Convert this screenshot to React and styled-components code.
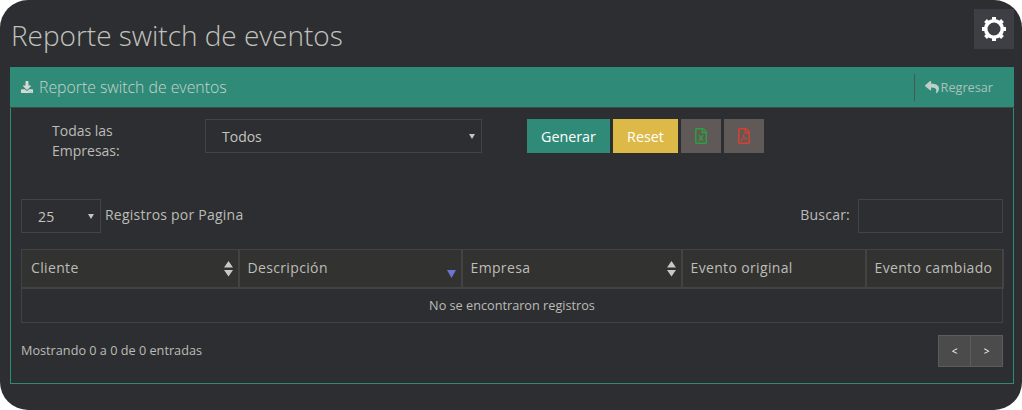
import React from "react";
import styled, { createGlobalStyle } from "styled-components";
import { FaDownload, FaReply, FaRegFileExcel, FaRegFilePdf } from "react-icons/fa";

const Global = createGlobalStyle`
  html, body { margin: 0; padding: 0; background: #fff; }
  body { font-family: "Open Sans", "Liberation Sans", sans-serif; }
  * { box-sizing: border-box; }
`;
const Page = styled.div`
  width: 1022px; height: 410px; background: #2d2e32; border-radius: 28px;
  padding: 9px 8px 0 10px; color: #c4c4be; overflow: hidden;
`;
const TitleBar = styled.div`
  display: flex; justify-content: space-between; align-items: flex-start; height: 58px;
`;
const Title = styled.h1`
  margin: 6px 0 0 1px; font-size: 28px; line-height: 40px; font-weight: 300; color: #c2c2bd; letter-spacing: -0.03px;
`;
const GearButton = styled.div`
  width: 40px; height: 40px; background: #3e3f44; display: flex; align-items: center; justify-content: center;
`;
const Panel = styled.section`
  width: 1004px; height: 317px; border: 1px solid #2f8b78; border-top: 0;
  display: flex; flex-direction: column;
`;
const PanelHead = styled.header`
  flex: none; height: 41px; margin: 0 -1px; width: 1004px; background: #2f8b78; border-bottom: 1px solid #3d4a4a;
  display: flex; align-items: center; justify-content: space-between; padding: 0 21px 0 11px;
  font-size: 15.8px; font-weight: 300; color: #c9d2cd;
`;
const HeadTitle = styled.div`
  display: flex; align-items: center; gap: 6px;
`;
const Back = styled.div`
  display: flex; align-items: center; gap: 2px; height: 27px; border-left: 1px solid #4b5555; padding-left: 10px;
  font-size: 12.7px; color: #a9c2ba; font-weight: 400;
`;
const FormRow = styled.div`
  flex: none; display: flex; align-items: flex-start; padding: 11px 0 0 41px; height: 91px;
`;
const FormLabel = styled.label`
  width: 153px; font-size: 14px; line-height: 20px; font-weight: 500; color: #bcbcb6; padding-top: 2px;
`;
const SelectBox = styled.div`
  position: relative; width: ${p => p.$w}px; height: 34px; border: 1px solid #434447; font-size: 14px;
  display: flex; align-items: center; padding-left: ${p => p.$pad}px; color: #c4c4be;
`;
const Caret = styled.span`
  position: absolute; right: 6px; top: 14px; width: 0; height: 0;
  border-left: 3px solid transparent; border-right: 3px solid transparent; border-top: 5px solid #c4c4be;
`;
const Buttons = styled.div`
  display: flex; gap: 3px; margin-left: 45px;
`;
const Button = styled.button`
  height: 34px; width: ${p => p.$w}px; border: 0; padding: 0; background: ${p => p.$bg};
  color: #fff; font: 400 14.3px "Open Sans", sans-serif;
  display: flex; align-items: center; justify-content: center;
`;
const Controls = styled.div`
  flex: none; display: flex; justify-content: space-between; align-items: flex-start; margin: 0 10px; height: 50px;
`;
const Inline = styled.div`
  display: flex; align-items: flex-start; gap: ${p => p.$gap}px; font-size: 14px; letter-spacing: .23px; color: #bcbcb6;
`;
const InlineLabel = styled.span`
  line-height: 32px;
`;
const SearchInput = styled.div`
  width: 145px; height: 34px; border: 1px solid #434447;
`;
const Table = styled.table`
  flex: none; width: 981px; margin-left: 10px; border-collapse: collapse; table-layout: fixed; font-size: 14px;
`;
const Th = styled.th`
  position: relative; height: 38px; background: #323230; border: 1px solid #434345; border-bottom-width: 2px;
  border-right-width: 2px; padding: 0 0 2px ${p => p.$pad}px; text-align: left; font-weight: 500; letter-spacing: .35px; color: #bdbdb7; white-space: nowrap;
`;
const Td = styled.td`
  height: 35px; border: 1px solid #434345; text-align: center; font-size: 12.7px; color: #bcbcb6; padding: 0;
`;
const Sort = styled.svg`
  position: absolute; right: ${p => p.$r}px; top: ${p => p.$t}px;
`;
const Footer = styled.div`
  flex: none; display: flex; justify-content: space-between; align-items: flex-start; margin: 12px 10px 0; font-size: 12.7px; color: #bcbcb6;
`;
const FooterText = styled.span`
  line-height: 30px;
`;
const Pager = styled.div`
  display: flex; width: 65px; height: 32px; border: 1px solid #5c5c5c; background: #4b4b4b;
`;
const PageLink = styled.div`
  flex: 1; display: flex; align-items: center; justify-content: center; color: #fff; font-size: 10px;
  & + & { border-left: 1px solid #5c5c5c; }
`;

const Gear = () => (
  <svg width="24" height="24" viewBox="0 0 24 24" fill="none">
    <circle cx="12" cy="12" r="8.3" stroke="#fff" strokeWidth="3.6" />
    <g fill="#fff">
      {[0, 45, 90, 135, 180, 225, 270, 315].map(a => (
        <rect key={a} x="10" y="0" width="4" height="4" transform={`rotate(${a} 12 12)`} />
      ))}
    </g>
  </svg>
);
const Updown = ({ r, t }) => (
  <Sort $r={r} $t={t} width="9" height="16" viewBox="0 0 9 16">
    <path d="M4.5 0 L9 6.5 H0 Z M0 9 H9 L4.5 15.5 Z" fill="#c8c8c8" />
  </Sort>
);
const Down = () => (
  <Sort $r={5} $t={20} width="9" height="8" viewBox="0 0 9 8">
    <path d="M0 0 H9 L4.5 8 Z" fill="#6f73d2" />
  </Sort>
);

export default function App() {
  return (
    <Page>
      <Global />
      <TitleBar>
        <Title>Reporte switch de eventos</Title>
        <GearButton><Gear /></GearButton>
      </TitleBar>
      <Panel>
        <PanelHead>
          <HeadTitle><FaDownload size={12} color="#d5d9d5" />Reporte switch de eventos</HeadTitle>
          <Back><FaReply size={14} color="#c0cec8" />Regresar</Back>
        </PanelHead>
        <FormRow>
          <FormLabel>Todas las<br />Empresas:</FormLabel>
          <SelectBox $w={277} $pad={16}>Todos<Caret /></SelectBox>
          <Buttons>
            <Button $w={83} $bg="#2f8b78">Generar</Button>
            <Button $w={65} $bg="#ddb947">Reset</Button>
            <Button $w={40} $bg="#5f5a58"><FaRegFileExcel size={16} color="#2f9e3f" /></Button>
            <Button $w={40} $bg="#5f5a58"><FaRegFilePdf size={16} color="#d8402f" /></Button>
          </Buttons>
        </FormRow>
        <Controls>
          <Inline $gap={4}>
            <SelectBox $w={80} $pad={16}>25<Caret /></SelectBox>
            <InlineLabel>Registros por Pagina</InlineLabel>
          </Inline>
          <Inline $gap={8}>
            <InlineLabel>Buscar:</InlineLabel>
            <SearchInput />
          </Inline>
        </Controls>
        <Table>
          <colgroup>
            <col width="217" /><col width="223" /><col width="220" /><col width="184" /><col width="137" />
          </colgroup>
          <thead>
            <tr>
              <Th $pad={9}>Cliente<Updown r={5} t={11} /></Th>
              <Th $pad={8}>Descripción<Down /></Th>
              <Th $pad={8}>Empresa<Updown r={5} t={11} /></Th>
              <Th $pad={8}>Evento original</Th>
              <Th $pad={8}>Evento cambiado</Th>
            </tr>
          </thead>
          <tbody>
            <tr><Td colSpan={5}>No se encontraron registros</Td></tr>
          </tbody>
        </Table>
        <Footer>
          <FooterText>Mostrando 0 a 0 de 0 entradas</FooterText>
          <Pager><PageLink>&lt;</PageLink><PageLink>&gt;</PageLink></Pager>
        </Footer>
      </Panel>
    </Page>
  );
}
